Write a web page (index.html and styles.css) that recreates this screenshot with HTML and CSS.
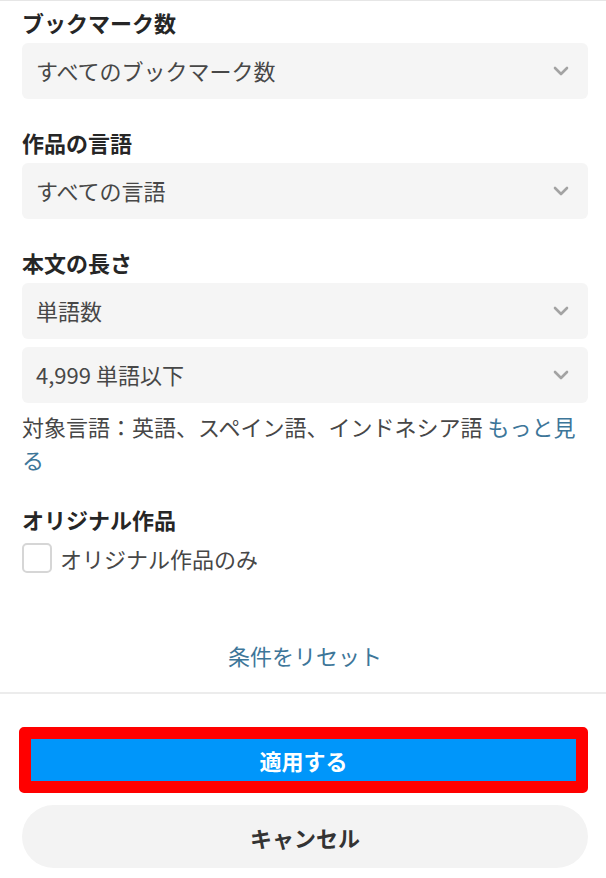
FILE: index.html
```html
<!DOCTYPE html>
<html lang="ja">
<head>
    <meta charset="UTF-8">
    <meta name="viewport" content="width=device-width, initial-scale=1.0">
    <title>絞り込み</title>
    <link rel="stylesheet" href="styles.css">
</head>
<body>
    <div class="panel">
        <div class="filters">
            <div class="field">
                <div class="field-label">ブックマーク数</div>
                <div class="select">
                    <span>すべてのブックマーク数</span>
                    <svg class="chevron" width="16" height="10" viewBox="0 0 16 10"><polyline points="2,2 8,8 14,2" /></svg>
                </div>
            </div>

            <div class="field">
                <div class="field-label">作品の言語</div>
                <div class="select">
                    <span>すべての言語</span>
                    <svg class="chevron" width="16" height="10" viewBox="0 0 16 10"><polyline points="2,2 8,8 14,2" /></svg>
                </div>
            </div>

            <div class="field">
                <div class="field-label">本文の長さ</div>
                <div class="select-group">
                    <div class="select">
                        <span>単語数</span>
                        <svg class="chevron" width="16" height="10" viewBox="0 0 16 10"><polyline points="2,2 8,8 14,2" /></svg>
                    </div>
                    <div class="select">
                        <span>4,999 単語以下</span>
                        <svg class="chevron" width="16" height="10" viewBox="0 0 16 10"><polyline points="2,2 8,8 14,2" /></svg>
                    </div>
                </div>
                <p class="note">対象言語：英語、スペイン語、インドネシア語 <a href="#" class="more">もっと見る</a></p>
            </div>

            <div class="field">
                <div class="field-label">オリジナル作品</div>
                <label class="check-row">
                    <span class="checkbox"></span>
                    <span>オリジナル作品のみ</span>
                </label>
            </div>

            <div class="reset-row">
                <a href="#" class="reset">条件をリセット</a>
            </div>
        </div>

        <div class="footer">
            <div class="highlight">
                <button class="apply">適用する</button>
            </div>
            <button class="cancel">キャンセル</button>
        </div>
    </div>
</body>
</html>
```

FILE: styles.css
```css
body {
    margin: 0;
    padding: 0;
    font-family: "Noto Sans CJK JP", "Noto Sans", sans-serif;
    background-color: #fff;
    color: #333;
}

.panel {
    width: 606px;
    height: 878px;
    border-top: 1px solid #e6e6e6;
    box-sizing: border-box;
    overflow: hidden;
}

.filters {
    padding: 8px 18px 0 22px;
}

.field {
    margin-bottom: 30px;
}

.field-label {
    font-size: 22px;
    font-weight: bold;
    line-height: 26px;
    color: #262626;
    margin-bottom: 8px;
}

.select-group {
    display: flex;
    flex-direction: column;
    gap: 8px;
}

.select {
    height: 56px;
    display: flex;
    align-items: center;
    justify-content: space-between;
    padding: 0 19px 0 14px;
    background-color: #f5f5f5;
    border-radius: 6px;
    font-size: 22px;
    color: #474747;
}

.select span {
    margin-top: -2px;
}

.chevron polyline {
    fill: none;
    stroke: #a3a3a3;
    stroke-width: 2.6;
    stroke-linecap: round;
    stroke-linejoin: round;
}

.note {
    margin: 7px 0 0;
    font-size: 22px;
    line-height: 33px;
    color: #474747;
}

.more {
    color: #3d7699;
    text-decoration: none;
}

.check-row {
    display: flex;
    align-items: center;
    gap: 8px;
    margin-top: 11px;
    font-size: 22px;
    color: #474747;
    line-height: 30px;
}

.checkbox {
    width: 26px;
    height: 26px;
    border: 2.5px solid #d6d6d6;
    border-radius: 5px;
    background-color: #fff;
}

.reset-row {
    text-align: center;
    padding: 37px 0 19px;
    line-height: 30px;
}

.reset {
    font-size: 22px;
    color: #3d7699;
    text-decoration: none;
}

.footer {
    border-top: 2px solid #ececec;
    padding: 33px 18px 0 19px;
    display: flex;
    flex-direction: column;
    gap: 12px;
}

.highlight {
    border: 12px solid #ff0000;
    border-radius: 5px;
}

button {
    font-family: inherit;
    font-weight: bold;
    font-size: 22px;
    border: none;
    cursor: pointer;
    display: block;
    width: 100%;
}

.apply {
    height: 42px;
    background-color: #0096fa;
    color: #fff;
}

.cancel {
    margin-left: 3px;
    width: calc(100% - 3px);
    height: 63px;
    border-radius: 32px;
    background-color: #f3f3f3;
    color: #333;
}
```
